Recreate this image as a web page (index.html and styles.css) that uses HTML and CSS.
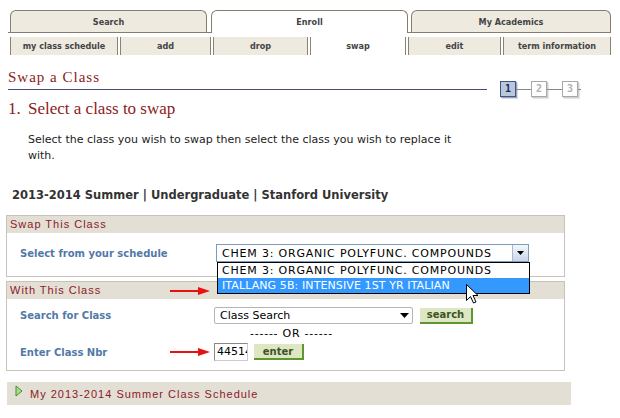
FILE: index.html
```html
<!DOCTYPE html>
<html>
<head>
<meta charset="utf-8">
<link rel="stylesheet" href="styles.css">
</head>
<body>
<div class="tabs">
  <div class="tab t-search">Search</div>
  <div class="tab t-enroll active">Enroll</div>
  <div class="tab t-acad">My Academics</div>
</div>
<div class="subtabs">
  <div class="subtab s1">my class schedule</div>
  <div class="subtab s2">add</div>
  <div class="subtab s3">drop</div>
  <div class="subtab s4 active">swap</div>
  <div class="subtab s5">edit</div>
  <div class="subtab s6">term information</div>
</div>

<div class="titlerow">
  <div class="title">Swap a Class</div>
  <div class="steps">
    <span class="step on">1</span><span class="link"></span><span class="step">2</span><span class="link"></span><span class="step">3</span><span class="tail"></span>
  </div>
</div>

<h1 class="heading"><span class="num">1.</span>Select a class to swap</h1>
<p class="intro">Select the class you wish to swap then select the class you wish to replace it with.</p>
<div class="term">2013-2014 Summer | Undergraduate | Stanford University</div>

<div class="pane pane1">
  <div class="pane-head">Swap This Class</div>
  <div class="pane-body">
    <div class="row1">
      <span class="label">Select from your schedule</span>
      <div class="combo">
        <div class="combo-box"><span class="combo-text">CHEM 3: ORGANIC POLYFUNC. COMPOUNDS</span><span class="combo-btn"><svg width="7" height="4" viewBox="0 0 7 4"><path d="M0 0H7L3.5 4Z" fill="#000"/></svg></span></div>
        <div class="combo-list">
          <div class="opt">CHEM 3: ORGANIC POLYFUNC. COMPOUNDS</div>
          <div class="opt sel">ITALLANG 5B: INTENSIVE 1ST YR ITALIAN</div>
        </div>
      </div>
    </div>
  </div>
</div>

<div class="pane pane2">
  <div class="pane-head">With This Class
    <svg class="arrow head-arrow" width="40" height="8" viewBox="0 0 40 8"><path d="M0 4H30" stroke="#e81010" stroke-width="2"/><path d="M28 0L40 4L28 8Z" fill="#e81010"/></svg>
  </div>
  <div class="pane-body grid">
    <span class="label">Search for Class</span>
    <span></span>
    <div class="ctl">
      <div class="dd"><span>Class Search</span><svg width="9" height="5" viewBox="0 0 9 5"><path d="M0 0H9L4.5 5Z" fill="#000"/></svg></div>
      <span class="btn b-search">search</span>
    </div>
    <span></span>
    <span></span>
    <div class="or">------ OR ------</div>
    <span class="label">Enter Class Nbr</span>
    <svg class="arrow" width="40" height="8" viewBox="0 0 40 8"><path d="M0 4H30" stroke="#e81010" stroke-width="2"/><path d="M28 0L40 4L28 8Z" fill="#e81010"/></svg>
    <div class="ctl">
      <div class="nbr">44514</div>
      <span class="btn b-enter">enter</span>
    </div>
  </div>
</div>

<div class="bar">
  <svg class="tri" width="8" height="12" viewBox="0 0 8 12"><path d="M1 1L7 6L1 11Z" fill="#a8dc8c" stroke="#3f8f30" stroke-width="1"/></svg>
  <span>My 2013-2014 Summer Class Schedule</span>
</div>

<svg class="cursor" width="13" height="20" viewBox="0 0 13 20"><path d="M0.5 0.5V16.5L4.5 12.5L7.5 19L10 18L7 11.5H12Z" fill="#fff" stroke="#000" stroke-width="1" stroke-linejoin="miter"/></svg>
</body>
</html>
```

FILE: styles.css
```css
* { box-sizing: border-box; }
html, body { margin: 0; padding: 0; background: #fff; }
body {
  font-family: "DejaVu Sans", Verdana, sans-serif;
  font-size: 11px;
  color: #222;
  width: 620px;
  height: 418px;
  overflow: hidden;
  position: relative;
}

/* top tabs */
.tabs {
  display: flex;
  align-items: flex-end;
  margin: 10px 0 0 8px;
  width: 603px;
  height: 23px;
  padding-left: 2px;
  border-bottom: 1px solid #857d6f;
}
.tab {
  height: 22px;
  border: 1px solid #857d6f;
  border-bottom: 0;
  border-radius: 6px 6px 0 0;
  background: #eeeae0;
  font-family: "DejaVu Sans Condensed", "DejaVu Sans", sans-serif;
  font-stretch: condensed;
  font-weight: bold;
  font-size: 9px;
  color: #444;
  display: flex;
  align-items: center;
  justify-content: center;
}
.t-search { width: 197px; }
.t-enroll { width: 197px; margin-left: 4px; }
.t-acad { width: 200px; margin-left: 3px; }
.tab.active { background: #fff; height: 23px; margin-bottom: -1px; padding-bottom: 1px; }

/* sub tabs */
.subtabs {
  display: flex;
  gap: 2px;
  margin: 4px 0 0 10px;
}
.subtab {
  height: 18px;
  border-left: 1px solid #8a8273;
  border-right: 1px solid #8a8273;
  background: #eeeae0;
  font-family: "DejaVu Sans Condensed", "DejaVu Sans", sans-serif;
  font-stretch: condensed;
  font-weight: bold;
  font-size: 9px;
  color: #444;
  display: flex;
  align-items: center;
  justify-content: center;
}
.subtab.active { background: #fff; }
.s1 { width: 108px; }
.s2 { width: 91px; }
.s3 { width: 95px; }
.s4 { width: 96px; }
.s5 { width: 93px; }
.s6 { width: 108px; }

/* title */
.titlerow {
  display: flex;
  margin: 12px 0 0 8px;
}
.title {
  width: 479px;
  border-bottom: 1px solid #4b4b7d;
  font-family: "Liberation Serif", "Times New Roman", serif;
  font-size: 15px;
  letter-spacing: 1px;
  color: #8b1c1c;
  line-height: 20px;
  padding-bottom: 2px;
}
.steps {
  display: flex;
  align-items: center;
  margin-left: 13px;
  align-self: flex-end;
  margin-bottom: -7px;
}
.step {
  width: 16px;
  height: 16px;
  border: 1px solid #a8a8a8;
  background: #fff;
  box-shadow: 1px 1px 0 #cfcfcf, 2px 2px 0 #e4e4e4;
  font-family: "DejaVu Sans Mono", monospace;
  font-weight: bold;
  font-size: 10px;
  line-height: 14px;
  text-align: center;
  color: #b0b0b0;
}
.step.on {
  background: #b9c9dd;
  border-color: #46557f;
  color: #1d2a55;
  box-shadow: 1px 1px 0 #9aa4b8, 2px 2px 0 #d8dce4;
}
.link { width: 15px; height: 1px; background: #888; }
.tail { width: 3px; height: 1px; background: #888; }

/* heading */
.heading {
  margin: 9px 0 0 8px;
  font-family: "Liberation Serif", "Times New Roman", serif;
  font-weight: normal;
  font-size: 17px;
  line-height: 20px;
  color: #8b1c1c;
}
.num { display: inline-block; width: 20px; }
.intro {
  margin: 13px 0 0 28px;
  width: 450px;
  line-height: 16px;
  color: #222;
}
.term {
  margin: 23px 0 0 12px;
  font-weight: bold;
  font-size: 11.5px;
  line-height: 16px;
  color: #333;
}

/* panes */
.pane {
  margin-left: 6px;
  width: 559px;
  border: 1px solid #c8c3b8;
}
.pane1 { margin-top: 12px; }
.pane2 { margin-top: 4px; }
.pane-head {
  position: relative;
  height: 17px;
  background: #e3dfd4;
  font-family: "Liberation Sans", Arial, sans-serif;
  font-size: 11px;
  letter-spacing: 1px;
  line-height: 17px;
  color: #8b1a2b;
  padding-left: 3px;
}
.pane-body { padding: 11px 0 14px 13px; }
.label {
  font-weight: bold;
  font-size: 10px;
  color: #5279a8;
}
.row1 { display: flex; align-items: center; height: 18px; }
.row1 .label { width: 196px; }

.combo { position: relative; }
.combo-box {
  width: 313px;
  height: 18px;
  border: 1px solid #7f9db9;
  display: flex;
  align-items: center;
  justify-content: space-between;
  padding-left: 5px;
}
.combo-text, .opt {
  font-size: 11px;
  letter-spacing: 0.8px;
  color: #000;
  white-space: nowrap;
}
.combo-btn {
  width: 16px;
  height: 16px;
  background: linear-gradient(#f4f7fc, #c9d6ea);
  border-left: 1px solid #a9b9d0;
  display: flex;
  align-items: center;
  justify-content: center;
}
.combo-list {
  position: absolute;
  left: 1px;
  top: 18px;
  width: 313px;
  border: 1px solid #000;
  background: #fff;
  z-index: 2;
}
.opt { height: 15px; line-height: 15px; padding-left: 4px; }
.opt.sel { background: #3399ff; color: #fff; letter-spacing: 0.1px; }

.arrow { display: block; }
.head-arrow { position: absolute; left: 163px; top: 5px; }

.pane-body.grid {
  display: grid;
  grid-template-columns: 150px 44px auto;
  align-items: center;
  padding: 8px 0 9px 13px;
}
.ctl { display: flex; align-items: center; gap: 7px; }
.dd {
  width: 199px;
  height: 17px;
  border: 1px solid #b5b5b5;
  border-radius: 2px;
  display: flex;
  align-items: center;
  justify-content: space-between;
  padding: 0 3px 0 5px;
  color: #000;
}
.btn {
  display: flex;
  align-items: center;
  justify-content: center;
  height: 16px;
  background: #dde7c3;
  border-right: 2px solid #5f9630;
  border-bottom: 2px solid #5f9630;
  font-weight: bold;
  font-size: 10px;
  color: #3b5323;
}
.b-search { width: 53px; }
.b-enter { width: 50px; margin-left: -1px; }
.or {
  height: 14px;
  line-height: 14px;
  margin: 3px 0 2px;
  padding-left: 36px;
  letter-spacing: 0.75px;
  color: #000;
}
.nbr {
  width: 34px;
  height: 18px;
  border: 1px solid #888;
  border-right-color: #ccc;
  border-bottom-color: #ccc;
  overflow: hidden;
  white-space: nowrap;
  line-height: 16px;
  padding-left: 2px;
  color: #000;
}

/* bottom bar */
.bar {
  margin: 11px 0 0 7px;
  width: 564px;
  height: 23px;
  background: #e3dfd4;
  display: flex;
  align-items: center;
  font-family: "Liberation Sans", Arial, sans-serif;
  font-size: 11px;
  letter-spacing: 1px;
  color: #8b1a2b;
  padding-left: 8px;
}
.tri { margin-right: 7px; margin-top: -5px; }

.cursor { position: absolute; left: 466px; top: 284px; z-index: 5; }
```
